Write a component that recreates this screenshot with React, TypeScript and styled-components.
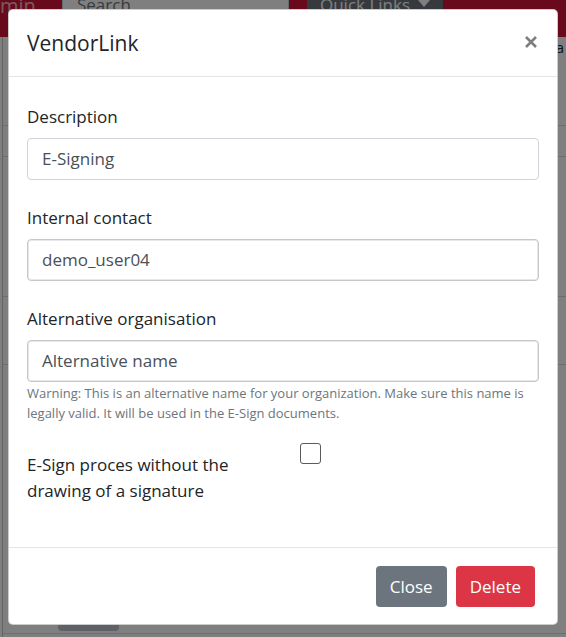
import React from "react";
import styled, { createGlobalStyle } from "styled-components";

const GlobalStyle = createGlobalStyle`
  html, body { margin: 0; padding: 0; }
  body {
    font-family: "Open Sans", "Noto Sans", Arial, sans-serif;
    background: #ffffff;
    color: #212529;
  }
  *, *::before, *::after { box-sizing: border-box; }
`;

const Page = styled.div`
  position: relative;
  width: 566px;
  height: 637px;
  overflow: hidden;
  background: #ffffff;
  display: flex;
  flex-direction: column;
`;

const NavBar = styled.header`
  height: 37px;
  flex: none;
  background: #d31438;
  display: flex;
  align-items: flex-start;
  overflow: hidden;
`;

const Brand = styled.div`
  width: 87px;
  margin-left: -25px;
  margin-top: -9px;
  font-size: 20px;
  line-height: 30px;
  color: rgba(255, 255, 255, 0.7);
  white-space: nowrap;
`;

const SearchBox = styled.div`
  width: 227px;
  height: 38px;
  margin-top: -15px;
  padding: 0 14px;
  background: #ffffff;
  border: 1px solid #ced4da;
  border-radius: 4px;
  display: flex;
  align-items: center;
  font-size: 17px;
  color: #6c757d;
`;

const QuickLinks = styled.div`
  width: 136px;
  height: 38px;
  margin-top: -15px;
  margin-left: 18px;
  background: #6c757d;
  border-radius: 4px;
  display: flex;
  align-items: center;
  justify-content: center;
  gap: 8px;
  font-size: 17px;
  color: #ffffff;
`;

const Main = styled.main`
  flex: 1;
  margin-left: 2px;
  border-left: 1px solid #c9c9c9;
  display: flex;
  flex-direction: column;
`;

const TableRow = styled.div<{ $h: number }>`
  height: ${(p) => p.$h}px;
  flex: none;
  border-bottom: 1px solid #dcdcdc;
  display: flex;
  justify-content: flex-end;
  align-items: flex-start;
  padding: 0 2px;
  font-size: 15px;
  line-height: 20px;
  color: #212529;
`;

const Spacer = styled.div`
  flex: 1;
`;

const BottomArea = styled.div`
  flex: none;
  padding: 0 0 2px 55px;
  border-bottom: 1px solid #dcdcdc;
  margin-bottom: 3px;
`;

const Pill = styled.div`
  width: 61px;
  height: 20px;
  border-radius: 4px;
  background: #bcc3ca;
`;

const Backdrop = styled.div`
  position: absolute;
  inset: 0;
  background: rgba(0, 0, 0, 0.5);
`;

const Modal = styled.div`
  position: absolute;
  top: 9px;
  left: 8px;
  width: 550px;
  background: #ffffff;
  border: 1px solid rgba(0, 0, 0, 0.2);
  border-radius: 5px;
  display: flex;
  flex-direction: column;
`;

const ModalHeader = styled.div`
  display: flex;
  align-items: center;
  justify-content: space-between;
  padding: 17px 20px 17px 18px;
  border-bottom: 1px solid #e3e6e9;
`;

const Title = styled.h5`
  margin: 0;
  font-size: 21px;
  font-weight: 500;
  line-height: 32px;
  color: #212529;
`;

const CloseX = styled.button`
  width: 12px;
  height: 12px;
  margin-top: -3px;
  padding: 0;
  border: 0;
  background: transparent;
  display: flex;
  cursor: pointer;
  opacity: 0.5;
`;

const ModalBody = styled.div`
  padding: 27px 18px 17px;
`;

const FormGroup = styled.div<{ $mb: number }>`
  margin-bottom: ${(p) => p.$mb}px;
`;

const Label = styled.label`
  display: block;
  font-size: 17px;
  line-height: 26px;
  margin-bottom: 7.5px;
  color: #212529;
`;

const Input = styled.input<{ $double?: boolean }>`
  display: block;
  width: 100%;
  height: 42px;
  padding: 0 14px;
  font-family: inherit;
  font-size: 17px;
  color: #495057;
  background: #ffffff;
  border: 1px solid ${(p) => (p.$double ? "#c4c8cc" : "#ced4da")};
  border-radius: 4px;
  box-shadow: ${(p) => (p.$double ? "inset 0 0 0 1px #e6e8ea" : "none")};
  outline: none;
`;

const HelpText = styled.small`
  display: block;
  margin-top: 1px;
  font-size: 13px;
  line-height: 20.5px;
  color: #6c757d;
`;

const CheckRow = styled.div`
  display: grid;
  grid-template-columns: 1fr 1fr;
  column-gap: 33px;
  margin-bottom: 18px;
`;

const CheckLabel = styled.label`
  padding: 9px 0 8px;
  font-size: 17px;
  line-height: 26px;
  color: #212529;
`;

const Checkbox = styled.input`
  appearance: none;
  -webkit-appearance: none;
  width: 21px;
  height: 21px;
  margin: 0;
  border: 1px solid #5a5a5a;
  border-radius: 3px;
  background: #ffffff;
`;

const ModalFooter = styled.div`
  display: flex;
  justify-content: flex-end;
  gap: 9px;
  padding: 18px 22px 17px;
  border-top: 1px solid #e3e6e9;
`;

const Button = styled.button<{ $variant: "secondary" | "danger" }>`
  height: 41px;
  padding: 0 13px;
  border: 1px solid transparent;
  border-radius: 4px;
  font-family: inherit;
  font-size: 17px;
  line-height: 26px;
  color: #ffffff;
  background: ${(p) => (p.$variant === "danger" ? "#dc3545" : "#6c757d")};
  cursor: pointer;
`;

export default function App() {
  return (
    <>
      <GlobalStyle />
      <Page>
        <NavBar>
          <Brand>Admin</Brand>
          <SearchBox>Search</SearchBox>
          <QuickLinks>
            Quick Links
            <svg width="12" height="8" viewBox="0 0 12 8">
              <path d="M0 0 L12 0 L6 7 Z" fill="#ffffff" />
            </svg>
          </QuickLinks>
        </NavBar>
        <Main>
          <TableRow $h={89}>Data</TableRow>
          <TableRow $h={31} />
          <TableRow $h={140} />
          <TableRow $h={68} />
          <Spacer />
          <BottomArea>
            <Pill />
          </BottomArea>
        </Main>
        <Backdrop />
        <Modal>
          <ModalHeader>
            <Title>VendorLink</Title>
            <CloseX aria-label="Close">
              <svg width="12" height="12" viewBox="0 0 12 12">
                <path d="M1 1 L11 11 M11 1 L1 11" stroke="#000" strokeWidth="2.6" />
              </svg>
            </CloseX>
          </ModalHeader>
          <ModalBody>
            <FormGroup $mb={25.5}>
              <Label>Description</Label>
              <Input defaultValue="E-Signing" />
            </FormGroup>
            <FormGroup $mb={25.5}>
              <Label>Internal contact</Label>
              <Input $double defaultValue="demo_user04" />
            </FormGroup>
            <FormGroup $mb={19.5}>
              <Label>Alternative organisation</Label>
              <Input $double defaultValue="Alternative name" />
              <HelpText>
                Warning: This is an alternative name for your organization. Make sure this name is
                legally valid. It will be used in the E-Sign documents.
              </HelpText>
            </FormGroup>
            <CheckRow>
              <CheckLabel>E-Sign proces without the drawing of a signature</CheckLabel>
              <div>
                <Checkbox type="checkbox" />
              </div>
            </CheckRow>
          </ModalBody>
          <ModalFooter>
            <Button $variant="secondary">Close</Button>
            <Button $variant="danger">Delete</Button>
          </ModalFooter>
        </Modal>
      </Page>
    </>
  );
}
